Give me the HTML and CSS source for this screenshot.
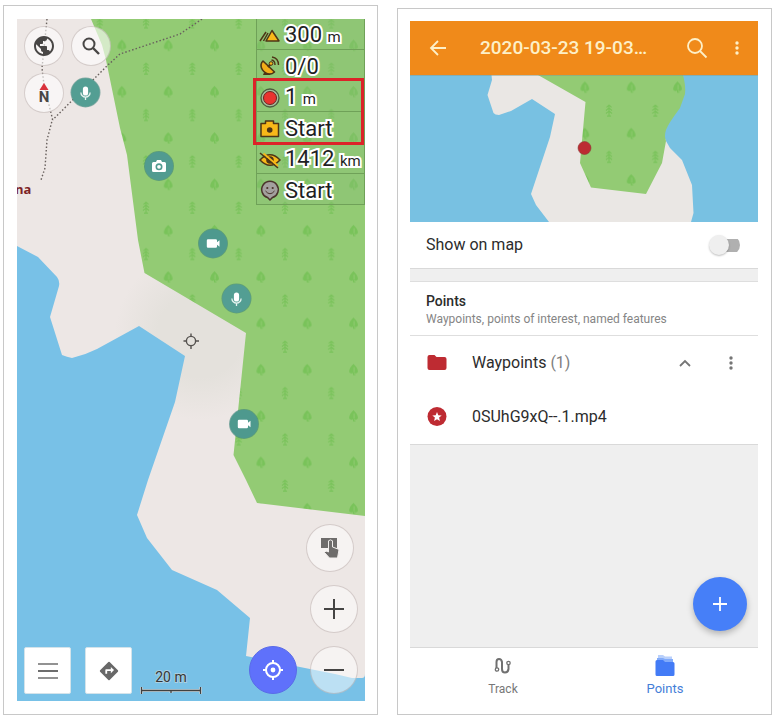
FILE: index.html
```html
<!DOCTYPE html>
<html lang="en">
<head>
<meta charset="utf-8">
<meta name="viewport" content="width=device-width, initial-scale=1">
<title>Map and track points</title>
<link rel="stylesheet" href="styles.css">
</head>
<body>
<main class="shots">
  <section class="shot">
    <div class="map">
      <svg class="map-art" viewBox="17 19 348 682" aria-hidden="true">
        <defs>
          <g id="leafy">
            <path d="M0-5.500C-2.200-3.500-4.300-.500-4.300 2C-4.300 3.600-3 4.400-1.500 4.200L-.500 3.700V6H2V5H.700V3.700C2.500 4.700 4.500 3.800 4.400 1.800C4.400-.500 2.200-3.600 0-5.500Z" fill="#79c35a"/>
            <path d="M.600 3V-2" stroke="#93cb74" stroke-width=".8"/>
          </g>
          <g id="pine" fill="none" stroke="#79c35a" stroke-width="1.100">
            <path d="M0-5.500V6M0-5L-2.500-2.500M0-5L2.500-2.500M0-2L-3 .500M0-2L3 .500M0 1L-3 3.500M0 1L3 3.500M-2 6H2"/>
          </g>
          <pattern id="woods" x="145" y="21.800" width="46.330" height="46.330" patternUnits="userSpaceOnUse">
            <rect width="46.330" height="46.330" fill="#93cb74"/>
            <use href="#leafy" x="23.160" y="23.160"/>
            <use href="#pine" x="1" y="0"/>
            <use href="#pine" x="47.330" y="0"/>
            <use href="#pine" x="1" y="46.330"/>
            <use href="#pine" x="47.330" y="46.330"/>
          </pattern>
          <radialGradient id="haze" gradientUnits="userSpaceOnUse" cx="200" cy="335" r="85">
            <stop offset=".5" stop-color="#e4e1dc"/>
            <stop offset="1" stop-color="#ede7e5"/>
          </radialGradient>
        </defs>
        <rect x="17" y="19" width="348" height="682" fill="#ede7e5"/>
        <circle cx="200" cy="335" r="85" fill="url(#haze)"/>
        <path d="M91 19L102 45L106 60L120 128L127 155L138 240L144.500 273L246 333L233.500 455L246 480L257 503L365 516V19Z" fill="url(#woods)"/>
        <path d="M17 246L38 257L57 277Q60 281 59 286L50 317L62 355Q67 357 72 358Q85 355 97 349L139 326L185 356L175 402L148 480L137 515L147 538L172 570L217 590L250 618L246 656L300 667L335 674L352 678H362Q365 678 365 674V701H17Z" fill="#78c1e7"/>
        <g fill="none" stroke="#68605d" stroke-width="1.400" stroke-dasharray="1.500 2.100">
          <path d="M47 19L42 68L44 85L52.500 119L47 140L45 168L41 180"/>
          <path d="M202 19L180 34L120 54L108 65L52.500 120"/>
        </g>
        <text class="place" x="15" y="194">na</text>
        <g fill="none" stroke="#55524f" stroke-width="1.400">
          <circle cx="191" cy="341" r="4.600"/>
          <path d="M191 333.500V337M191 345V349M183.500 341H187M195 341H199"/>
        </g>
        <g>
          <g id="mic-pin" transform="translate(85.500 92.500)">
            <circle r="15" fill="#3d8278" opacity=".6"/>
            <circle r="14.200" fill="#539e93"/>
            <path d="M-2.600-3.500A2.600 2.600 0 0 1 2.600-3.500V.500A2.600 2.600 0 0 1-2.600.500Z" fill="#fff"/>
            <path d="M-4.600 0A4.600 4.600 0 0 0 4.600 0M0 4.500V7.500" fill="none" stroke="#e6f3f0" stroke-width="1.300"/>
          </g>
          <use href="#mic-pin" x="151" y="206"/>
          <g transform="translate(159 166)">
            <circle r="15" fill="#3d8278" opacity=".6"/>
            <circle r="14.200" fill="#519b90"/>
            <path d="M-5.500-4H-3L-2-6H2L3-4H5.500Q7-4 7-2.500V4.500Q7 6 5.500 6H-5.500Q-7 6-7 4.500V-2.500Q-7-4-5.500-4Z" fill="#fff"/>
            <circle cy=".8" r="2.700" fill="#fff" stroke="#519b90" stroke-width="1.600"/>
          </g>
          <g id="video-pin" transform="translate(213 243.500)">
            <circle r="15" fill="#3d8278" opacity=".6"/>
            <circle r="14.200" fill="#4e998e"/>
            <path d="M-5-4.300H2.800Q4-4.300 4-3V-1.200L6.500-3.300V3.300L4 1.200V3Q4 4.300 2.800 4.300H-5Q-6.200 4.300-6.200 3V-3Q-6.200-4.300-5-4.300Z" fill="#fff"/>
          </g>
          <use href="#video-pin" x="31" y="180.500"/>
        </g>
      </svg>

      <div class="map-ui">
        <div class="map-top">
          <div class="round-grid">
            <button class="round small" type="button" aria-label="Map style">
              <svg width="24" height="24" viewBox="0 0 24 24"><path fill="#484645" d="M12 2C6.480 2 2 6.480 2 12s4.480 10 10 10 10-4.480 10-10S17.520 2 12 2zm-1 17.930c-3.950-.49-7-3.850-7-7.930 0-.62.080-1.210.210-1.790L9 15v1c0 1.100.9 2 2 2v1.930zm6.900-2.540c-.26-.81-1-1.390-1.900-1.390h-1v-3c0-.55-.45-1-1-1H8v-2h2c.55 0 1-.45 1-1V7h2c1.100 0 2-.9 2-2v-.41c2.930 1.190 5 4.060 5 7.410 0 2.080-.8 3.970-2.100 5.390z"/></svg>
            </button>
            <button class="round small" type="button" aria-label="Search">
              <svg width="20" height="20" viewBox="0 0 20 20" fill="none" stroke="#484645"><circle cx="8" cy="8" r="5.500" stroke-width="2"/><path d="M12 12L18 18" stroke-width="2.400"/></svg>
            </button>
            <button class="round small" type="button" aria-label="Compass north">
              <span class="compass"><svg width="10" height="7" viewBox="0 0 10 7"><path d="M5 0L9.500 7H.5Z" fill="#d9323c"/></svg><span>N</span></span>
            </button>
          </div>
          <div class="widgets">
            <button class="widget" type="button">
              <svg width="22" height="22" viewBox="0 0 22 22"><path d="M7 16L13 5.500L20 16Z" fill="#f8b819" stroke="#4e3516" stroke-width="1.500" stroke-linejoin="round"/><path d="M1 16L7 7M4.500 16L9 8" stroke="#4e3516" stroke-width="1.500"/></svg>
              <span class="value">300 <small>m</small></span>
            </button>
            <button class="widget" type="button">
              <svg width="22" height="22" viewBox="0 0 22 22"><path d="M4 5Q1 8 2.500 12T9 18Q13 18.500 15.500 16Z" fill="#f4ae18" stroke="#4e3516" stroke-width="1.600" stroke-linejoin="round"/><path d="M5 16.500L4 19H11L10 17.500Z" fill="#4e3516"/><path d="M9 11L12 7.500" stroke="#4e3516" stroke-width="2"/><circle cx="12" cy="7.500" r="1.800" fill="#f8b819" stroke="#4e3516"/><path d="M12.500 4Q16 4.500 16 9M13 1Q19.500 2 19.500 9" fill="none" stroke="#4e3516" stroke-width="1.400"/></svg>
              <span class="value">0/0</span>
            </button>
            <button class="widget" type="button">
              <svg width="22" height="22" viewBox="0 0 22 22"><circle cx="11" cy="11" r="9" fill="#a8b99a" stroke="#4d5d3f" stroke-width="1.300"/><circle cx="11" cy="11" r="6.500" fill="#ea332f" stroke="#6b2720"/></svg>
              <span class="value">1 <small>m</small></span>
            </button>
            <button class="widget" type="button">
              <svg width="22" height="22" viewBox="0 0 22 22"><path d="M2 5.500H6.500V3H14.500V5.500H19.500V18.500H2Z" fill="#f8b819" stroke="#4e3516" stroke-width="1.500" stroke-linejoin="round"/><circle cx="10.700" cy="12" r="2.800" fill="#4e3516"/></svg>
              <span class="value">Start</span>
            </button>
            <button class="widget" type="button">
              <svg width="22" height="22" viewBox="0 0 22 22"><path d="M1 11Q11 .5 21 11Q11 21.500 1 11Z" fill="#f8b819" stroke="#4e3516" stroke-width="1.500"/><circle cx="11" cy="11" r="3.800" fill="#4e3516"/><path d="M4.500 4.500L19 17" stroke="#f8b819" stroke-width="2"/><path d="M1 4L19 19" stroke="#4e3516" stroke-width="1.600"/></svg>
              <span class="value">1412 <small>km</small></span>
            </button>
            <button class="widget" type="button">
              <svg width="22" height="22" viewBox="0 0 22 22"><path d="M8.500 17.500A8.300 8.300 0 1 1 13.500 17.500L11 20Z" fill="#a3a09e" stroke="#4a342b" stroke-width="1.500"/><circle cx="8.300" cy="8" r="1.100" fill="#4a342b"/><circle cx="13.700" cy="8" r="1.100" fill="#4a342b"/><path d="M6.500 11Q11 16.500 15.500 11" fill="none" stroke="#4a342b"/></svg>
              <span class="value">Start</span>
            </button>
            <div class="highlight"></div>
          </div>
        </div>

        <div class="map-bottom">
          <button class="square" type="button" aria-label="Menu">
            <svg width="20" height="18" viewBox="0 0 20 18" stroke-width="2"><path d="M0 2H20M0 16H20" stroke="#929292"/><path d="M0 9H20" stroke="#6d6d6d"/></svg>
          </button>
          <button class="square" type="button" aria-label="Directions">
            <svg width="22" height="22" viewBox="0 0 24 24"><path fill="#686868" d="M21.710 11.290l-9-9a1 1 0 0 0-1.410 0l-9 9a1 1 0 0 0 0 1.410l9 9c.39.39 1.020.39 1.410 0l9-9a1 1 0 0 0 0-1.410zM14 14.500V12h-4v3H8v-4c0-.55.45-1 1-1h5V7.500l3.500 3.500-3.500 3.500z"/></svg>
          </button>
          <div class="scale">
            <span>20 m</span>
            <svg width="62" height="7" viewBox="0 1 62 7" fill="none"><path d="M1.500 1V8M60.500 1V8M1 4.500H61M31 4V7" stroke="#c7dbe5" stroke-width="3"/><path d="M1.500 1V8M60.500 1V8M1 4.500H61M31 4V7" stroke="#414141" stroke-width="1.300"/></svg>
          </div>
          <button class="round locate" type="button" aria-label="My location">
            <svg width="22" height="22" viewBox="0 0 22 22" fill="none" stroke="#fff" stroke-width="2"><circle cx="11" cy="11" r="7"/><circle cx="11" cy="11" r="2.400" fill="#fff" stroke="none"/><path d="M11 1V4M11 18V21M1 11H4M18 11H21"/></svg>
          </button>
          <div class="zoom">
            <button class="round inset" type="button" aria-label="Quick action">
              <svg width="22" height="22" viewBox="0 0 22 22"><path d="M2 1H18V11H2Z" fill="#6e6c6b"/><path d="M9.500 3.800Q11.500 2 13.500 3.800V10L19 12Q20 12.500 19.800 13.800L18.500 21H10.500L5.500 15.500L7 14L9.500 15Z" fill="#6e6c6b" stroke="#f1eeed" stroke-width="1"/></svg>
            </button>
            <button class="round" type="button" aria-label="Zoom in">
              <svg width="20" height="20" viewBox="0 0 20 20"><path d="M0 10H20M10 0V20" stroke="#454443" stroke-width="2"/></svg>
            </button>
            <button class="round" type="button" aria-label="Zoom out">
              <svg width="20" height="20" viewBox="0 0 20 20"><path d="M0 10H20" stroke="#454443" stroke-width="2"/></svg>
            </button>
          </div>
        </div>
      </div>
    </div>
  </section>

  <section class="shot lower">
    <div class="screen">
      <header class="bar">
        <button class="icon-button" type="button" aria-label="Back">
          <svg width="18" height="18" viewBox="0 0 18 18" fill="none" stroke="#fdf0c8" stroke-width="1.800"><path d="M17 9H2.500M9 2L2 9L9 16"/></svg>
        </button>
        <h1>2020-03-23 19-03…</h1>
        <button class="icon-button" type="button" aria-label="Search">
          <svg width="22" height="22" viewBox="0 0 22 22" fill="none" stroke="#fdf0c8" stroke-width="1.800"><circle cx="9" cy="9" r="7"/><path d="M14 14L20.500 20.500"/></svg>
        </button>
        <button class="icon-button" type="button" aria-label="More options">
          <svg width="4" height="16" viewBox="0 0 4 16" fill="#fdf0c8"><circle cx="2" cy="3" r="1.700"/><circle cx="2" cy="8" r="1.700"/><circle cx="2" cy="13" r="1.700"/></svg>
        </button>
      </header>
      <svg class="map-art" viewBox="410 75 348 147" aria-hidden="true">
        <defs>
          <pattern id="grove" x="608" y="110" width="46.330" height="46.330" patternUnits="userSpaceOnUse">
            <rect width="46.330" height="46.330" fill="#93cb74"/>
            <use href="#leafy" x="23.160" y="23.160"/>
            <use href="#pine" x="1" y="0"/>
            <use href="#pine" x="47.330" y="0"/>
            <use href="#pine" x="1" y="46.330"/>
            <use href="#pine" x="47.330" y="46.330"/>
          </pattern>
        </defs>
        <rect x="410" y="75" width="348" height="147" fill="#78c1e2"/>
        <path d="M491.500 75L492 80L487.500 95L493.500 113Q495 115 499 115L511 111L532 99L555 114L550 137L531 194L536 205L549 222H691L693.500 213L692 185L682 160L670 148L666 141L640 75Z" fill="#eae7e4"/>
        <path d="M538 75L585.500 102L580 163L591 187.500L646 194L662 163L666 141Q664 136 666 130Q668 124 680 108L685 94Q686 86 683 75Z" fill="url(#grove)"/>
        <circle cx="584.500" cy="148" r="6.500" fill="#bc2b32" stroke="#8b3a35" stroke-width=".6"/>
        <path d="M410 75.500H758" stroke="#8a9a88" opacity=".5"/>
      </svg>

      <div class="row toggle-row">
        <label for="show">Show on map</label>
        <input class="switch" id="show" type="checkbox" role="switch">
      </div>

      <div class="section-head">
        <h2>Points</h2>
        <p>Waypoints, points of interest, named features</p>
      </div>
      <div class="row">
        <svg width="22" height="22" viewBox="0 0 22 22"><path d="M3.500 3H8.500L10.500 5H18.500Q20.500 5 20.500 7V16Q20.500 18 18.500 18H3.500Q1.500 18 1.500 16V5Q1.500 3 3.500 3Z" fill="#be2b32"/></svg>
        <span class="name">Waypoints <span class="count">(1)</span></span>
        <button class="icon-button chevron" type="button" aria-label="Collapse">
          <svg width="12" height="8" viewBox="0 0 12 8" fill="none" stroke="#757575" stroke-width="1.800"><path d="M1 7L6 2L11 7"/></svg>
        </button>
        <button class="icon-button" type="button" aria-label="Group options">
          <svg width="4" height="16" viewBox="0 0 4 16" fill="#757575"><circle cx="2" cy="3" r="1.700"/><circle cx="2" cy="8" r="1.700"/><circle cx="2" cy="13" r="1.700"/></svg>
        </button>
      </div>
      <div class="row last">
        <svg width="22" height="22" viewBox="0 0 22 22"><circle cx="11" cy="10.500" r="9.500" fill="#be2b32"/><path d="M11 6L12.300 9.200L15.700 9.400L13.100 11.600L13.900 15L11 13.200L8.100 15L8.900 11.600L6.300 9.400L9.700 9.200Z" fill="#fff"/></svg>
        <span class="name">0SUhG9xQ--.1.mp4</span>
      </div>

      <div class="blank">
        <button class="fab" type="button" aria-label="Add point">
          <svg width="14" height="14" viewBox="0 0 14 14"><path d="M0 7H14M7 0V14" stroke="#fff" stroke-width="1.800"/></svg>
        </button>
      </div>

      <nav class="tabs">
        <a href="#track">
          <svg width="22" height="22" viewBox="0 0 22 22" fill="none" stroke="#707070" stroke-width="2"><circle cx="5" cy="14.500" r="1.700" stroke-width="1.300"/><path d="M4.500 13V7Q4.500 4 7 4T10 7V14Q10 17.500 13 17.500T16.500 14V10"/><circle cx="16.500" cy="8" r="1.700" stroke-width="1.300"/></svg>
          <span>Track</span>
        </a>
        <a class="current" href="#points" aria-current="page">
          <svg width="22" height="22" viewBox="0 0 22 22"><path d="M4 0H9L11 1.500H18V6H4Z" fill="#b9d0fb"/><path d="M3 3H9L11 4H19V8H3Z" fill="#82abfa"/><path d="M3 5H9L11 7H19Q20.500 7 20.500 8.500V19.500Q20.500 21 19 21H3Q1.500 21 1.500 19.500V6.500Q1.500 5 3 5Z" fill="#437bf6"/></svg>
          <span>Points</span>
        </a>
      </nav>
    </div>
  </section>
</main>
</body>
</html>
```

FILE: styles.css
```css
* {
  box-sizing: border-box;
}

body {
  margin: 0;
  background: #fff;
  color: #2c2c2c;
  font-family: Roboto, "Liberation Sans", sans-serif;
}

h1, h2, p {
  margin: 0;
}

button {
  padding: 0;
  border: 0;
  background: none;
  color: inherit;
  font: inherit;
  cursor: pointer;
}

svg {
  display: block;
  flex: none;
}

.shots {
  display: grid;
  grid-template-columns: 1fr 1fr;
  gap: 19px;
  padding: 5px 6px 4px 3px;
}

.shot {
  display: flex;
  flex-direction: column;
  border: 1px solid #c8c8c8;
  padding: 13px 12px 13px 13px;
}

.shot.lower {
  margin-top: 3px;
  padding: 12px 13px 13px 12px;
}

.map-art {
  width: 100%;
  height: auto;
}

/* Map screen */

.map {
  position: relative;
  overflow: hidden;
}

.place {
  fill: #7d2426;
  font: bold 13px "Noto Sans", sans-serif;
}

.map-ui {
  position: absolute;
  inset: 0;
  display: flex;
  flex-direction: column;
  justify-content: space-between;
}

.map-top {
  display: flex;
  justify-content: space-between;
  align-items: flex-start;
}

.round-grid {
  display: grid;
  grid-template-columns: 40px 40px;
  gap: 7px;
  padding: 7px;
}

.round {
  display: grid;
  place-items: center;
  width: 48px;
  height: 48px;
  border: 1px solid rgba(150, 130, 125, 0.35);
  border-radius: 50%;
  background: rgba(255, 255, 255, 0.5);
}

.round.small {
  width: 40px;
  height: 40px;
  background: rgba(255, 255, 255, 0.6);
}

.round.locate {
  border-color: #5a6be8;
  background: #5f71fb;
}

.compass {
  display: grid;
  justify-items: center;
  color: #484645;
  font-size: 15px;
  font-weight: 700;
  line-height: 14px;
}

.widgets {
  position: relative;
  width: 109px;
}

.widget {
  display: flex;
  align-items: center;
  gap: 4px;
  width: 100%;
  height: 31px;
  padding: 3px 0 0 2px;
  border: 1px solid #6fa158;
  border-top-width: 0;
  background: rgba(138, 190, 120, 0.35);
  color: #1f1f24;
  font-size: 22px;
  line-height: 28px;
  text-align: left;
  white-space: nowrap;
}

.value {
  -webkit-text-stroke: 4px #fff;
  paint-order: stroke fill;
}

.value small {
  font-size: 15px;
}

.highlight {
  position: absolute;
  top: 59px;
  left: -3px;
  right: 1px;
  height: 67px;
  border: 3px solid #dc2329;
  pointer-events: none;
}

.map-bottom {
  display: flex;
  align-items: flex-end;
  padding: 0 7px 7px;
}

.square {
  display: grid;
  place-items: center;
  width: 47px;
  height: 47px;
  margin-right: 14px;
  border: 1px solid #d4e3ea;
  border-radius: 2px;
  background: #fff;
}

.scale {
  display: grid;
  justify-items: center;
  margin-left: -6px;
  color: #363636;
  font-size: 14px;
  line-height: 20px;
  -webkit-text-stroke: 2px #a9cfe2;
  paint-order: stroke fill;
}

.locate {
  margin-left: auto;
  margin-right: 9px;
}

.zoom {
  display: grid;
  justify-items: end;
  gap: 13px;
}

.inset {
  margin-right: 4px;
}

/* Track details screen */

.screen {
  display: flex;
  flex: 1;
  flex-direction: column;
}

.bar {
  display: flex;
  align-items: center;
  height: 54px;
  padding: 0 9px 0 16px;
  background: #f08a1a;
  color: #fdf0c8;
}

.bar h1 {
  flex: 1;
  padding-left: 30px;
  font-size: 19px;
  font-weight: 500;
  line-height: 24px;
  white-space: nowrap;
}

.icon-button {
  display: grid;
  place-items: center;
  width: 24px;
  height: 32px;
}

.bar .icon-button + .icon-button {
  margin-left: 16px;
}

.row {
  display: flex;
  align-items: center;
  height: 54px;
  padding: 0 15px 0 16px;
  font-size: 16px;
  line-height: 20px;
}

.toggle-row {
  justify-content: space-between;
  height: 47px;
  padding-right: 18px;
  border-bottom: 1px solid #d9d9d9;
}

.switch {
  display: flex;
  align-items: center;
  width: 31px;
  height: 20px;
  margin: 0;
  appearance: none;
  background: linear-gradient(#b0b0b0, #b0b0b0) right center / 20px 13px no-repeat;
  border-radius: 10px;
  cursor: pointer;
}

.switch::before {
  width: 20px;
  height: 20px;
  border-radius: 50%;
  background: #efefef;
  box-shadow: 0 1px 2px rgba(0, 0, 0, 0.25);
  content: "";
}

.switch:checked {
  justify-content: flex-end;
  background-position: left center;
}

.section-head {
  height: 67px;
  padding: 11px 16px 0;
  border-top: 12px solid #efefef;
  border-bottom: 1px solid #dedede;
  box-shadow: inset 0 1px #dedede;
}

.section-head h2 {
  font-size: 14px;
  font-weight: 500;
  line-height: 18px;
}

.section-head p {
  color: #858585;
  font-size: 12px;
  line-height: 18px;
}

.name {
  flex: 1;
  padding-left: 24px;
}

.count {
  color: #808080;
}

.chevron {
  margin-right: 22px;
}

.blank {
  display: flex;
  flex: 1;
  justify-content: flex-end;
  align-items: flex-end;
  padding: 0 11px 16px;
  border-top: 1px solid #d9d9d9;
  border-bottom: 1px solid #d9d9d9;
  background: #efefef;
}

.fab {
  display: grid;
  place-items: center;
  width: 54px;
  height: 54px;
  border-radius: 50%;
  background: #467ff8;
  box-shadow: 0 3px 6px rgba(0, 0, 0, 0.25);
}

.tabs {
  display: grid;
  grid-template-columns: 1fr 1fr;
  height: 53px;
  padding: 7px 12px 0;
}

.tabs a {
  display: grid;
  justify-items: center;
  align-content: start;
  gap: 3px;
  color: #777;
  font-size: 12px;
  line-height: 18px;
  text-decoration: none;
}

.tabs .current {
  color: #447ed8;
  font-size: 13px;
}
```
